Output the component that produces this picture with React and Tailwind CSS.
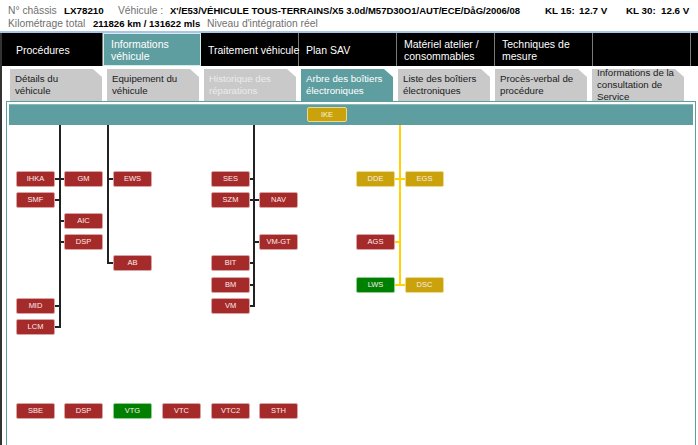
import React from 'react'

const COLS = [7, 55, 104, 153, 202, 250, 299, 347, 396]
const ROWS = [46, 67, 88, 109, 130, 152, 173, 194]
const BUSES = [
  { x: 50, end: 7, color: 'bg-[#222]' },
  { x: 98, end: 4, color: 'bg-[#222]' },
  { x: 244, end: 6, color: 'bg-[#222]' },
  { x: 390, end: 5, color: 'bg-[#ffd400]' },
]

// label, col, row, colour, bus, side of bus
const NODES = [
  ['IHKA', 0, 0, 'red', 0, 'l'],
  ['GM', 1, 0, 'red', 0, 'r'],
  ['EWS', 2, 0, 'red', 1, 'r'],
  ['SMF', 0, 1, 'red', 0, 'l'],
  ['AIC', 1, 2, 'red', 0, 'r'],
  ['DSP', 1, 3, 'red', 0, 'r'],
  ['AB', 2, 4, 'red', 1, 'r'],
  ['MID', 0, 6, 'red', 0, 'l'],
  ['LCM', 0, 7, 'red', 0, 'l'],
  ['SES', 4, 0, 'red', 2, 'l'],
  ['SZM', 4, 1, 'red', 2, 'l'],
  ['NAV', 5, 1, 'red', 2, 'r'],
  ['VM-GT', 5, 3, 'red', 2, 'r'],
  ['BIT', 4, 4, 'red', 2, 'l'],
  ['BM', 4, 5, 'red', 2, 'l'],
  ['VM', 4, 6, 'red', 2, 'l'],
  ['DDE', 7, 0, 'gold', 3, 'l'],
  ['EGS', 8, 0, 'gold', 3, 'r'],
  ['AGS', 7, 3, 'red', 3, 'l'],
  ['LWS', 7, 5, 'green', 3, 'l'],
  ['DSC', 8, 5, 'gold', 3, 'r'],
]

const BOTTOM = [
  ['SBE', 'red'], ['DSP', 'red'], ['VTG', 'green'], ['VTC', 'red'], ['VTC2', 'red'], ['STH', 'red'],
]

const FILL = {
  red: 'bg-[#a52a2a] border-[#dba3a3]',
  gold: 'bg-[#c9a20c] border-[#ecd88e]',
  green: 'bg-[#008000] border-[#8fcc8f]',
}

function Node({ label, x, y, color }) {
  return (
    <div
      className={`absolute w-[39px] h-[16px] rounded-[2px] border flex items-center justify-center text-[7.5px] text-[#fbecec] ${FILL[color]}`}
      style={{ left: x, top: y }}
    >
      {label}
    </div>
  )
}

const NAV = [
  { label: ['Procédures'], w: 'w-[101px] pl-[14px]' },
  { label: ['Informations', 'véhicule'], active: true },
  { label: ['Traitement véhicule'] },
  { label: ['Plan SAV'] },
  { label: ['Matériel atelier /', 'consommables'] },
  { label: ['Techniques de', 'mesure'] },
  { label: [] },
  { label: [] },
]

const TABS = [
  { label: ['Détails du', 'véhicule'] },
  { label: ['Equipement du', 'véhicule'] },
  { label: ['Historique des', 'réparations'], off: true },
  { label: ['Arbre des boîtiers', 'électroniques'], active: true },
  { label: ['Liste des boîtiers', 'électroniques'] },
  { label: ['Procès-verbal de', 'procédure'] },
  { label: ['Informations de la', 'consultation de', 'Service'] },
]

export default function App() {
  return (
    <div className="w-[698px] h-[445px] overflow-hidden bg-white font-['Liberation_Sans',Arial,sans-serif]">
      <header className="h-[31px] pl-[8px] pt-[4px] text-[10.3px] leading-[13px] whitespace-nowrap">
        <div className="flex">
          <span className="w-[56px] text-[#707070]">N° châssis</span>
          <span className="w-[54px] font-bold text-[9.8px]">LX78210</span>
          <span className="w-[52px] text-[#707070]">Véhicule :</span>
          <span className="w-[375px] font-bold text-[9.5px]">X'/E53/VÉHICULE TOUS-TERRAINS/X5 3.0d/M57D30O1/AUT/ECE/DåG/2006/08</span>
          <span className="w-[34px] font-bold text-[9.8px]">KL 15:</span>
          <span className="w-[47px] font-bold text-[9.8px]">12.7 V</span>
          <span className="w-[35px] font-bold text-[9.8px]">KL 30:</span>
          <span className="font-bold text-[9.8px]">12.6 V</span>
        </div>
        <div className="flex">
          <span className="w-[85px] text-[#707070]">Kilométrage total</span>
          <span className="w-[114px] font-bold text-[9.6px]">211826 km / 131622 mls</span>
          <span className="text-[#707070]">Niveau d'intégration réel</span>
        </div>
      </header>
      <div className="h-[2px] bg-[#a9c6e8]" />

      <div className="border-l-2 border-[#333]">
        <nav className="flex h-[33px] bg-black text-white text-[10.5px] leading-[12px] whitespace-nowrap">
          {NAV.map((n, i) => (
            <div
              key={i}
              className={`shrink-0 flex flex-col justify-center ${n.w || 'w-[98px] pl-[7px]'} ${n.active ? 'bg-[#5f9ea0] border border-[#d6ecec]' : 'border-r border-[#7a7a7a]'}`}
            >
              {n.label.map((l) => <span key={l}>{l}</span>)}
            </div>
          ))}
        </nav>

        <div className="flex gap-[5px] pl-[8px] pt-[3px]">
          {TABS.map((t, i) => (
            <div
              key={i}
              className={`w-[92px] h-[32px] shrink-0 pl-[5px] flex flex-col justify-center text-[9.7px] leading-[12px] whitespace-nowrap [clip-path:polygon(0_0,calc(100%_-_9px)_0,100%_8px,100%_100%,0_100%)] ${t.active ? 'bg-[#5f9ea0] text-white' : 'bg-[#c9c9c9]'} ${t.off ? 'text-[#ececec]' : t.active ? '' : 'text-[#202020]'}`}
            >
              {t.label.map((l) => <span key={l}>{l}</span>)}
            </div>
          ))}
        </div>

        <div className="ml-[4px] w-[690px] border border-[#5f9ea0] p-[2px]">
          <div className="h-[21px] bg-[#5f9ea0] border-t border-[#86b9ba] pl-[298px] pt-[2px]">
            <div className="w-[40px] h-[15px] rounded-[2px] border border-[#ecd88e] bg-[#c9a20c] flex items-center justify-center text-[7.5px] text-[#fbf3d6]">
              IKE
            </div>
          </div>

          <div className="relative h-[330px]">
            {BUSES.map((b, i) => (
              <div key={i} className={`absolute top-0 w-[2px] ${b.color}`} style={{ left: b.x, height: ROWS[b.end] + 9 }} />
            ))}
            {NODES.map(([label, c, r, color, bus, side]) => {
              const b = BUSES[bus]
              const x = COLS[c]
              const stubLeft = side === 'l' ? x + 39 : b.x + 2
              const stubW = side === 'l' ? b.x - (x + 39) : x - b.x - 2
              return (
                <React.Fragment key={label + c + r}>
                  <div className={`absolute h-[2px] ${b.color}`} style={{ left: stubLeft, top: ROWS[r] + 7, width: stubW }} />
                  <Node label={label} x={x} y={ROWS[r]} color={color} />
                </React.Fragment>
              )
            })}
            {BOTTOM.map(([label, color], i) => (
              <Node key={label + i} label={label} x={COLS[i]} y={278} color={color} />
            ))}
          </div>
        </div>
      </div>
    </div>
  )
}
